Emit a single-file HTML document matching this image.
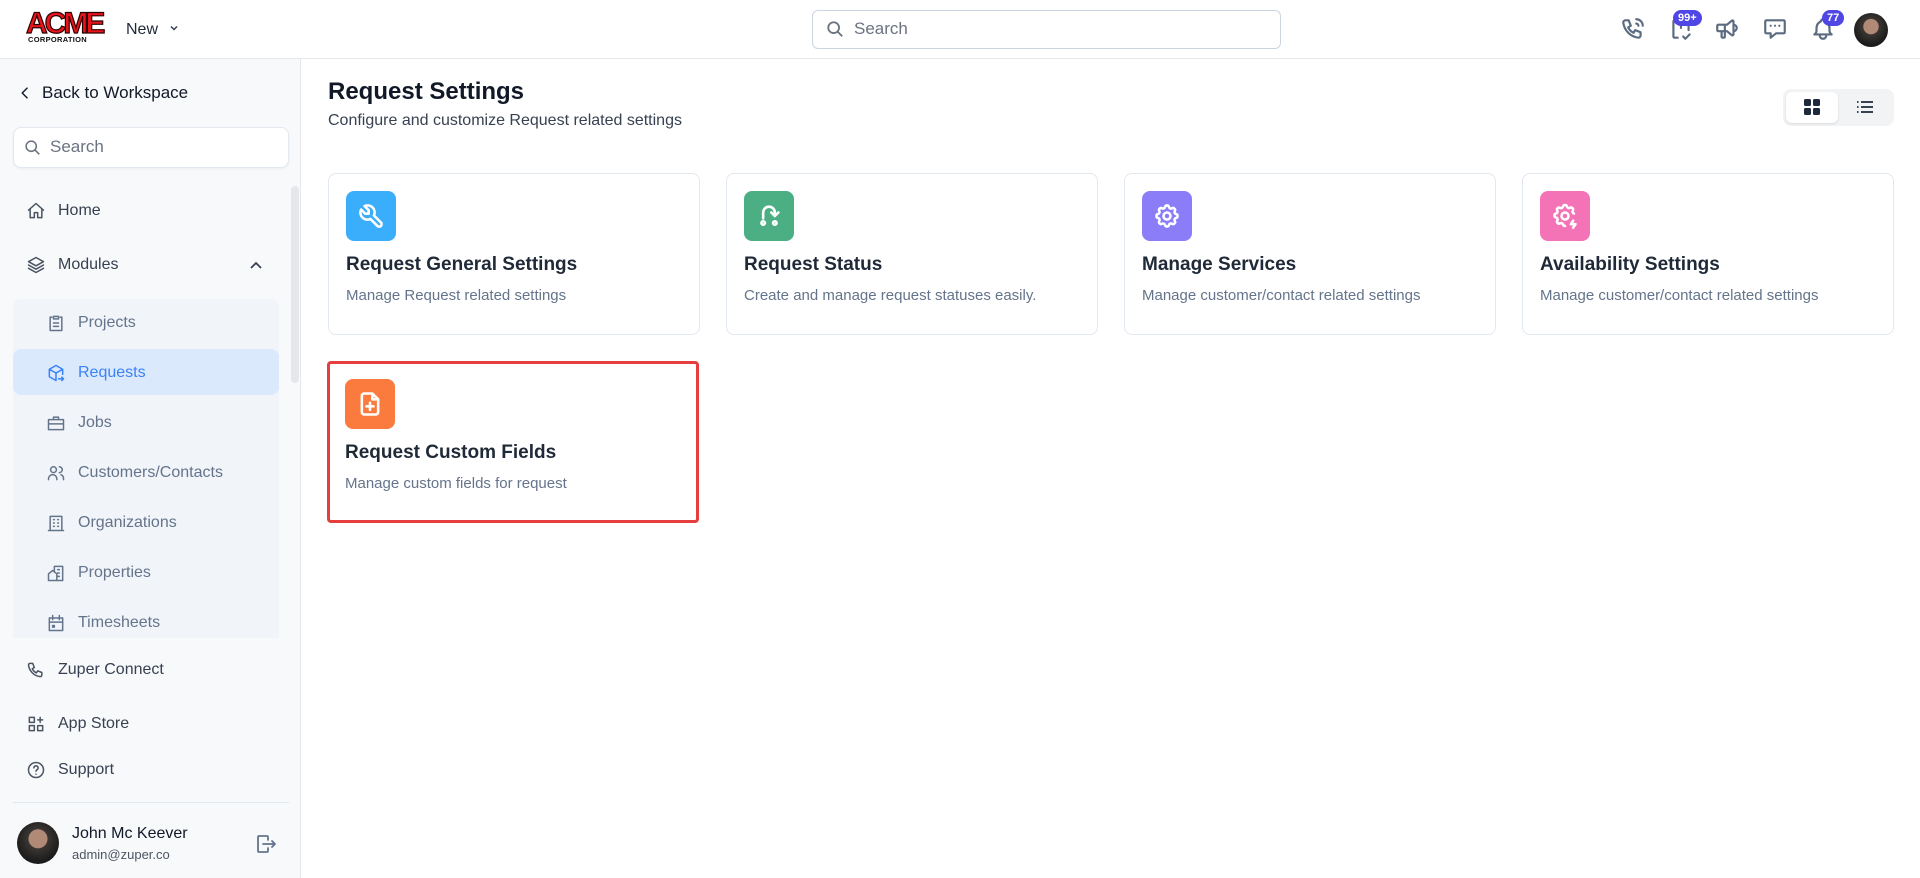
<!DOCTYPE html>
<html><head><meta charset="utf-8"><style>
*{box-sizing:border-box;margin:0;padding:0}
body{width:1920px;height:878px;overflow:hidden;background:#fff;font-family:"Liberation Sans",sans-serif;color:#111827;position:relative}
.a{position:absolute}
.hdr{left:0;top:0;width:1920px;height:59px;border-bottom:1px solid #e5e7eb;background:#fff}
.side{left:0;top:59px;width:301px;height:819px;background:#f8f9fb;border-right:1px solid #e5e7eb}
.nav{font-size:16px;color:#374151;display:flex;align-items:center}
.nav svg{width:20px;height:20px;margin-right:12px;fill:none;stroke:#4b5563;stroke-width:1.8;stroke-linecap:round;stroke-linejoin:round}
.sub{font-size:16px;color:#64748b;display:flex;align-items:center}
.sub svg{width:20px;height:20px;margin-right:12px;fill:none;stroke:#64748b;stroke-width:1.8;stroke-linecap:round;stroke-linejoin:round}
.card{width:372px;height:162px;border:1px solid #e2e8f0;border-radius:8px;background:#fff}
.ic{position:absolute;left:17px;top:17px;width:50px;height:50px;border-radius:8px;display:flex;align-items:center;justify-content:center}
.ic svg{width:28px;height:28px;fill:none;stroke:#fff;stroke-width:2.2;stroke-linecap:round;stroke-linejoin:round}
.ct{position:absolute;left:17px;top:80px;font-size:19px;font-weight:bold;color:#1f2937}
.cd{position:absolute;left:17px;top:113px;font-size:15px;color:#64748b}
.ti svg{width:26px;height:26px;fill:none;stroke:#5b6b80;stroke-width:2;stroke-linecap:round;stroke-linejoin:round}
.badge{background:#4f46e5;color:#fff;font-size:11px;border-radius:9px;padding:2px 5px;font-weight:bold}
</style></head><body>
<div class="a hdr">
 <div class="a" style="left:26px;top:11px;font-family:'Liberation Sans',sans-serif;font-weight:900;font-size:30px;color:#e8141c;letter-spacing:-3px;line-height:26px;-webkit-text-stroke:1.2px #2a0000">ACME</div>
 <div class="a" style="left:28px;top:35px;font-size:7.5px;font-weight:bold;letter-spacing:0.3px;color:#111">CORPORATION</div>
 <div class="a" style="left:126px;top:21px;font-size:16px;color:#1f2937">New</div>
 <svg class="a" style="left:168px;top:22px" width="12" height="12" viewBox="0 0 12 12"><path d="M3 4.5l3 3 3-3" fill="none" stroke="#374151" stroke-width="1.5"/></svg>
 <div class="a" style="left:812px;top:10px;width:469px;height:39px;border:1px solid #cbd5e1;border-radius:6px"></div>
 <svg class="a" style="left:826px;top:20px" width="18" height="18" viewBox="0 0 20 20"><circle cx="8.5" cy="8.5" r="6" fill="none" stroke="#6b7280" stroke-width="2"/><path d="M13 13l5 5" stroke="#6b7280" stroke-width="2"/></svg>
 <div class="a" style="left:854px;top:19px;font-size:17px;color:#6b7280">Search</div>
 <div class="a ti" style="left:1620px;top:16px"><svg viewBox="0 0 24 24"><path d="M5 4h3l2 5-2.5 1.5a11 11 0 0 0 5 5L14 13l5 2v3a2 2 0 0 1-2 2A16 16 0 0 1 3 6a2 2 0 0 1 2-2M15 3a6 6 0 0 1 6 6M15 7a2 2 0 0 1 2 2"/></svg></div>
 <div class="a ti" style="left:1668px;top:16px"><svg viewBox="0 0 24 24"><path d="M9 20H6a1 1 0 0 1-1-1V5a1 1 0 0 1 1-1h12a1 1 0 0 1 1 1v8M12 8v3M14 19l2 2 4-4"/></svg></div>
 <div class="a badge" style="left:1673px;top:10px">99+</div>
 <div class="a ti" style="left:1714px;top:16px"><svg viewBox="0 0 24 24"><path d="M18 8a3 3 0 0 1 0 6M10 8v11a1 1 0 0 1-1 1H8a1 1 0 0 1-1-1v-5M12 8l4.6-3.8A1 1 0 0 1 18 5v12a1 1 0 0 1-1.4.8L12 14H4a1 1 0 0 1-1-1V9a1 1 0 0 1 1-1z"/></svg></div>
 <div class="a ti" style="left:1762px;top:16px"><svg viewBox="0 0 24 24"><path d="M8 9h.01M12 9h.01M16 9h.01M4 4h16a1 1 0 0 1 1 1v10a1 1 0 0 1-1 1h-7l-5 4v-4H4a1 1 0 0 1-1-1V5a1 1 0 0 1 1-1z"/></svg></div>
 <div class="a ti" style="left:1810px;top:16px"><svg viewBox="0 0 24 24"><path d="M10 5a2 2 0 1 1 4 0a7 7 0 0 1 4 6v3a4 4 0 0 0 2 3H4a4 4 0 0 0 2-3v-3a7 7 0 0 1 4-6M9 17v1a3 3 0 0 0 6 0v-1"/></svg></div>
 <div class="a badge" style="left:1822px;top:10px">77</div>
 <div class="a" style="left:1854px;top:13px;width:34px;height:34px;border-radius:50%;background:radial-gradient(circle at 50% 40%,#b08a76 0 28%,#3a3532 30%,#1b1b1b 70%)"></div>
</div>
<div class="a side">
 <div class="a nav" style="left:18px;top:24px;font-size:17px;color:#111827"><svg viewBox="0 0 20 20" style="width:14px;height:14px;margin-right:10px;stroke:#111827;stroke-width:2"><path d="M13 3l-7 7 7 7"/></svg>Back to Workspace</div>
 <div class="a" style="left:13px;top:68px;width:276px;height:41px;border:1px solid #e2e8f0;border-radius:8px;background:#fff;box-shadow:0 1px 2px rgba(0,0,0,.05)"></div>
 <svg class="a" style="left:24px;top:80px" width="17" height="17" viewBox="0 0 20 20"><circle cx="8.5" cy="8.5" r="6" fill="none" stroke="#6b7280" stroke-width="1.8"/><path d="M13 13l5 5" stroke="#6b7280" stroke-width="1.8"/></svg>
 <div class="a" style="left:50px;top:78px;font-size:17px;color:#6b7280">Search</div>
 <div class="a" style="left:291px;top:127px;width:8px;height:197px;border-radius:4px;background:#e5e7eb"></div>
 <div class="a nav" style="left:26px;top:142px"><svg viewBox="0 0 24 24"><path d="M3 11l9-8 9 8M5 9v11h5v-6h4v6h5V9"/></svg>Home</div>
 <div class="a nav" style="left:26px;top:196px"><svg viewBox="0 0 24 24"><path d="M12 3l9 5-9 5-9-5zM3 12l9 5 9-5M3 16l9 5 9-5"/></svg>Modules</div>
 <svg class="a" style="left:248px;top:199px" width="16" height="16" viewBox="0 0 16 16"><path d="M3 10l5-5 5 5" fill="none" stroke="#374151" stroke-width="1.8"/></svg>
 <div class="a" style="left:13px;top:240px;width:266px;height:339px;background:#f1f4f9;border-radius:8px 8px 0 0"></div>
 <div class="a" style="left:13px;top:290px;width:266px;height:46px;background:#dbe9fd;border-radius:8px"></div>
 <div class="a sub" style="left:46px;top:254px"><svg viewBox="0 0 24 24"><path d="M9 4h6v3H9zM7 5H5v16h14V5h-2M9 12h6M9 16h6"/></svg>Projects</div>
 <div class="a sub" style="left:46px;top:304px;color:#3b82f6"><svg viewBox="0 0 24 24" style="stroke:#3b82f6"><path d="M12 3l8 4.5v6M12 3L4 7.5v9L12 21M4 7.5l8 4.5 8-4.5M12 12v9M15 19h6M19 17l2 2-2 2"/></svg>Requests</div>
 <div class="a sub" style="left:46px;top:354px"><svg viewBox="0 0 24 24"><path d="M3 8h18v12H3zM9 8V5h6v3M3 13h18"/></svg>Jobs</div>
 <div class="a sub" style="left:46px;top:404px"><svg viewBox="0 0 24 24"><circle cx="9" cy="8" r="3.5"/><path d="M3 20v-1a5 5 0 0 1 10 0v1M16 4.5a3.5 3.5 0 0 1 0 7M18 14a5 5 0 0 1 3 5v1"/></svg>Customers/Contacts</div>
 <div class="a sub" style="left:46px;top:454px"><svg viewBox="0 0 24 24"><path d="M5 21V4h14v17M3 21h18M9 8h1M14 8h1M9 12h1M14 12h1M9 16h1M14 16h1"/></svg>Organizations</div>
 <div class="a sub" style="left:46px;top:504px"><svg viewBox="0 0 24 24"><path d="M3 21V13l5-4 5 4v8H3zM10 10V4h10v17h-7M14 8h2M14 12h2M14 16h2"/></svg>Properties</div>
 <div class="a sub" style="left:46px;top:554px"><svg viewBox="0 0 24 24"><path d="M4 6h16v15H4zM8 3v5M16 3v5M4 11h16M8 15h2v2H8z"/></svg>Timesheets</div>
 <div class="a nav" style="left:26px;top:601px"><svg viewBox="0 0 24 24"><path d="M5 4h3l2 5-2.5 1.5a11 11 0 0 0 5 5L14 13l5 2v3a2 2 0 0 1-2 2A16 16 0 0 1 3 6a2 2 0 0 1 2-2"/></svg>Zuper Connect</div>
 <div class="a nav" style="left:26px;top:655px"><svg viewBox="0 0 24 24"><path d="M4 4h6v6H4zM4 14h6v6H4zM14 14h6v6h-6zM17 4v6M14 7h6"/></svg>App Store</div>
 <div class="a nav" style="left:26px;top:701px"><svg viewBox="0 0 24 24"><circle cx="12" cy="12" r="9"/><path d="M9.5 9.5a2.5 2.5 0 1 1 3.5 2.3c-.6.3-1 .9-1 1.7M12 17h.01"/></svg>Support</div>
 <div class="a" style="left:13px;top:743px;width:276px;height:1px;background:#e2e8f0"></div>
 <div class="a" style="left:17px;top:763px;width:42px;height:42px;border-radius:50%;background:radial-gradient(circle at 50% 40%,#b08a76 0 28%,#3a3532 30%,#1b1b1b 70%)"></div>
 <div class="a" style="left:72px;top:766px;font-size:16px;color:#111827">John Mc Keever</div>
 <div class="a" style="left:72px;top:788px;font-size:13px;color:#4b5563">admin@zuper.co</div>
 <svg class="a" style="left:254px;top:773px" width="24" height="24" viewBox="0 0 24 24" fill="none" stroke="#64748b" stroke-width="1.8" stroke-linecap="round" stroke-linejoin="round"><path d="M14 8V5a1 1 0 0 0-1-1H5a1 1 0 0 0-1 1v14a1 1 0 0 0 1 1h8a1 1 0 0 0 1-1v-3M9 12h12M18 9l3 3-3 3"/></svg>
</div>
<div class="a" style="left:328px;top:78px;font-size:24px;font-weight:bold;color:#111827">Request Settings</div>
<div class="a" style="left:328px;top:112px;font-size:16px;color:#374151">Configure and customize Request related settings</div>
<div class="a" style="left:1783px;top:89px;width:111px;height:37px;border-radius:8px;background:#f1f3f5"></div>
<div class="a" style="left:1786px;top:92px;width:52px;height:31px;border-radius:6px;background:#fff;box-shadow:0 1px 2px rgba(0,0,0,.1)"></div>
<svg class="a" style="left:1804px;top:99px" width="16" height="16" viewBox="0 0 16 16" fill="#1e293b"><rect x="0" y="0" width="7" height="7" rx="1.5"/><rect x="9" y="0" width="7" height="7" rx="1.5"/><rect x="0" y="9" width="7" height="7" rx="1.5"/><rect x="9" y="9" width="7" height="7" rx="1.5"/></svg>
<svg class="a" style="left:1857px;top:100px" width="16" height="14" viewBox="0 0 16 14" stroke="#1e293b" stroke-width="1.8"><path d="M4 2h12M4 7h12M4 12h12M0 2h1.5M0 7h1.5M0 12h1.5"/></svg>

<div class="a card" style="left:328px;top:173px"><div class="ic" style="background:#3aaefb"><svg viewBox="0 0 24 24"><path d="M7 10h3V7L6.5 3.5a6 6 0 0 1 8 8l6 6a2 2 0 0 1-3 3l-6-6a6 6 0 0 1-8-8z"/></svg></div><div class="ct">Request General Settings</div><div class="cd">Manage Request related settings</div></div>
<div class="a card" style="left:726px;top:173px"><div class="ic" style="background:#4caf84"><svg viewBox="0 0 24 24"><path d="M7 14V9a5 5 0 0 1 10 0v3M14 9l3 3 3-3"/><circle cx="7" cy="18" r="1.5"/><circle cx="17" cy="18" r="1.5"/></svg></div><div class="ct">Request Status</div><div class="cd">Create and manage request statuses easily.</div></div>
<div class="a card" style="left:1124px;top:173px"><div class="ic" style="background:#8b7cf8"><svg viewBox="0 0 24 24"><circle cx="12" cy="12" r="3"/><path d="M10.3 4.3c.4-1.8 3-1.8 3.4 0a1.7 1.7 0 0 0 2.6 1.1c1.5-.9 3.3.8 2.4 2.4a1.7 1.7 0 0 0 1 2.5c1.8.4 1.8 3 0 3.4a1.7 1.7 0 0 0-1 2.6c.9 1.5-.8 3.3-2.4 2.4a1.7 1.7 0 0 0-2.6 1c-.4 1.8-3 1.8-3.4 0a1.7 1.7 0 0 0-2.5-1c-1.6.9-3.300-.8-2.4-2.4a1.7 1.7 0 0 0-1.1-2.6c-1.8-.4-1.8-3 0-3.4a1.7 1.7 0 0 0 1.1-2.5c-.9-1.6.8-3.3 2.4-2.4a1.7 1.7 0 0 0 2.5-1.1z"/></svg></div><div class="ct">Manage Services</div><div class="cd">Manage customer/contact related settings</div></div>
<div class="a card" style="left:1522px;top:173px"><div class="ic" style="background:#f472b6"><svg viewBox="0 0 24 24"><circle cx="12" cy="12" r="3"/><path d="M12 20.5a1.7 1.7 0 0 1-1.7-1.2 1.7 1.7 0 0 0-2.5-1c-1.6.9-3.3-.8-2.4-2.4a1.7 1.7 0 0 0-1.1-2.6c-1.8-.4-1.8-3 0-3.4a1.7 1.7 0 0 0 1.1-2.5c-.9-1.6.8-3.3 2.4-2.4a1.7 1.7 0 0 0 2.5-1.1c.4-1.8 3-1.8 3.4 0a1.7 1.7 0 0 0 2.6 1.1c1.5-.9 3.3.8 2.4 2.4a1.7 1.7 0 0 0 1 2.5M19 16l-2 3h4l-2 3"/></svg></div><div class="ct">Availability Settings</div><div class="cd">Manage customer/contact related settings</div></div>
<div class="a card" style="left:327px;top:361px;height:162px;border:3px solid #e53e3e;border-radius:4px"><div class="ic" style="background:#fb7a3d;left:15px;top:15px"><svg viewBox="0 0 24 24"><path d="M14 3H7a2 2 0 0 0-2 2v14a2 2 0 0 0 2 2h10a2 2 0 0 0 2-2V8zM14 3v5h5M12 11v6M9 14h6"/></svg></div><div class="ct" style="left:15px;top:78px">Request Custom Fields</div><div class="cd" style="left:15px;top:111px">Manage custom fields for request</div></div>
</body></html>
